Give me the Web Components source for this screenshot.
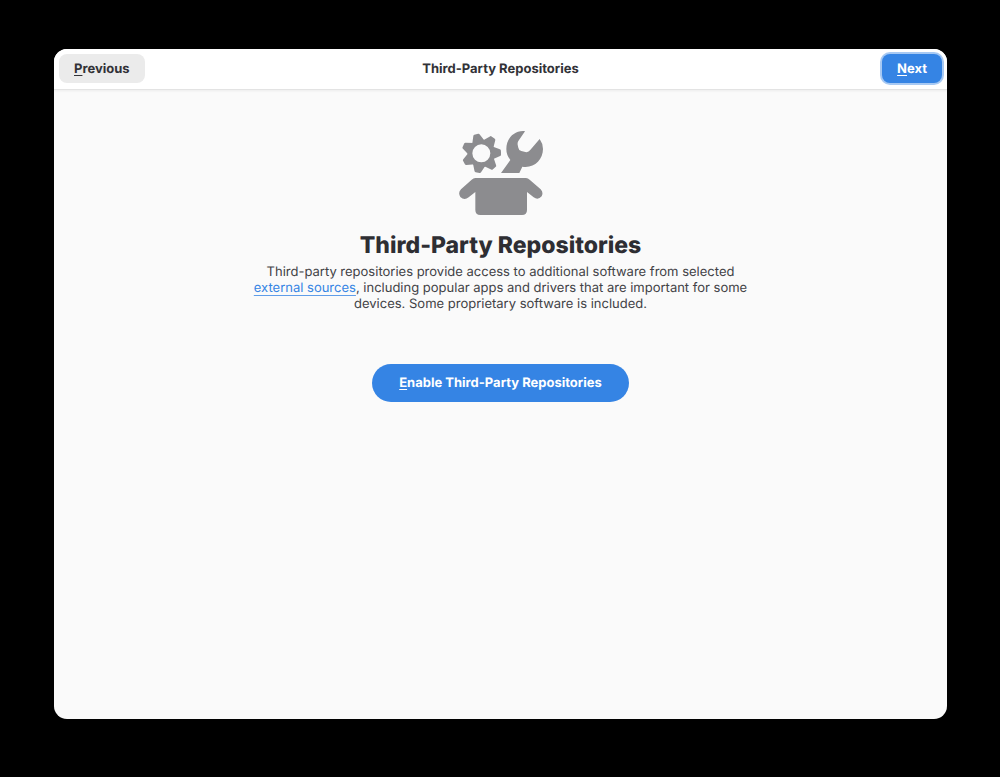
<!DOCTYPE html>
<html lang="en">
<head>
<meta charset="utf-8">
<title>Third-Party Repositories</title>
<style>
  body { margin: 0; background: #000; font-family: Inter, "Noto Sans", sans-serif; font-size: 13px; color: #323237; text-rendering: geometricPrecision; }
</style>
</head>
<body>
<setup-window>
  <setup-header slot="header" heading="Third-Party Repositories">
    <setup-button slot="start"><u>P</u>revious</setup-button>
    <setup-button slot="end" variant="suggested"><u>N</u>ext</setup-button>
  </setup-header>
  <status-page heading="Third-Party Repositories">
    <package-icon slot="icon"></package-icon>
    Third-party repositories provide access to additional software from selected
    <text-link href="#external-sources">external sources</text-link>, including popular apps and drivers that are important for some devices. Some proprietary software is included.
    <setup-button slot="action" variant="pill"><u>E</u>nable Third-Party Repositories</setup-button>
  </status-page>
</setup-window>
<script>
class BaseElement extends HTMLElement {
  constructor() {
    super();
    this.attachShadow({ mode: "open" }).innerHTML = this.constructor.markup;
    const title = this.shadowRoot.querySelector("[data-heading]");
    if (title) title.textContent = this.getAttribute("heading");
  }
}

customElements.define("setup-window", class extends BaseElement {
  static markup = `
    <style>
      :host { display: flex; box-sizing: border-box; min-height: 100vh; padding: 49px 53px 58px 54px; }
      .window { flex: 1; display: flex; flex-direction: column; overflow: hidden; border-radius: 13px; background: #fafafa; }
      main { flex: 1; }
    </style>
    <div class="window"><slot name="header"></slot><main><slot></slot></main></div>`;
});

customElements.define("setup-header", class extends BaseElement {
  static markup = `
    <style>
      :host { display: block; }
      header { display: grid; grid-template-columns: 1fr auto 1fr; align-items: center; padding: 5px 5px 6px; background: #fff; border-bottom: 1px solid #e3e3e3; box-shadow: 0 1px 2px #ececec; }
      .end { justify-self: end; }
      .title { font-weight: 700; line-height: 16px; }
    </style>
    <header><slot name="start"></slot><div class="title" data-heading></div><div class="end"><slot name="end"></slot></div></header>`;
});

customElements.define("setup-button", class extends BaseElement {
  static markup = `
    <style>
      :host { display: inline-block; vertical-align: top; }
      button { display: block; height: 29px; padding: 0 15px; border: 0; border-radius: 8px; background: #ebebeb; color: #323237; font: 700 13px/16px Inter, "Noto Sans", sans-serif; text-rendering: inherit; }
      :host([variant]) button { background: #3584e4; color: #fff; }
      :host([variant="suggested"]) button { box-shadow: 0 0 0 2px #a7c9f3; }
      :host([variant="pill"]) button { height: 38px; padding: 0 27px; border-radius: 19px; }
      ::slotted(u) { text-decoration: underline; text-underline-offset: 2px; text-decoration-thickness: 1px; text-decoration-skip-ink: none; }
    </style>
    <button type="button"><slot></slot></button>`;
});

customElements.define("text-link", class extends BaseElement {
  static markup = `
    <style>
      :host { display: inline; }
      a { color: #3584e4; text-decoration: underline 1px #5f9de9; text-underline-offset: 3px; text-decoration-skip-ink: none; }
    </style><a><slot></slot></a>`;
  connectedCallback() { this.shadowRoot.querySelector("a").href = this.getAttribute("href"); }
});

customElements.define("status-page", class extends BaseElement {
  static markup = `
    <style>
      :host { display: flex; flex-direction: column; align-items: center; padding: 41px 24px; text-align: center; }
      h1 { margin: 15px 0 4px; font-size: 23px; line-height: 30px; font-weight: 800; color: #2e2e33; }
      p { max-width: 500px; margin: 0 0 52px; line-height: 16px; color: #424246; }
    </style>
    <slot name="icon"></slot>
    <h1 data-heading></h1>
    <p><slot></slot></p>
    <slot name="action"></slot>`;
});

const tooth = angle => `<path d="M32 -20L56 -10Q59 -9 59 -6V6Q59 9 56 10L32 20Z" transform="rotate(${angle})"/>`;
customElements.define("package-icon", class extends BaseElement {
  static markup = `
    <style>
      :host { display: block; width: 84px; height: 84px; }
      svg { display: block; width: 100%; height: 100%; }
    </style>
    <svg viewBox="26 32 252 252" fill="#8c8c8f" aria-hidden="true">
      <g transform="translate(93 99)">
        <circle r="34" fill="none" stroke="#8c8c8f" stroke-width="14"/>
        ${[-2, 49, 101, 152, 204, 255, 307].map(tooth).join("")}
      </g>
      <path d="M222 32C189 31 168 56 168 86Q168 104 180 119L152 158H207L216 139C250 145 278 119 278 86Q278 70 268 56L239 90Q234 97 225 95L213 92Q205 90 204 82L202 73Q201 67 204 62L224 33Z"/>
      <path d="M75 173H227Q233 173 238 178L271 207Q280 216 274 228Q263 241 250 231L230 215V269Q230 284 215 284H90Q75 284 75 269V215L55 231Q42 241 30 230Q22 217 32 207L64 178Q69 173 75 173Z"/>
    </svg>`;
});
</script>
</body>
</html>
